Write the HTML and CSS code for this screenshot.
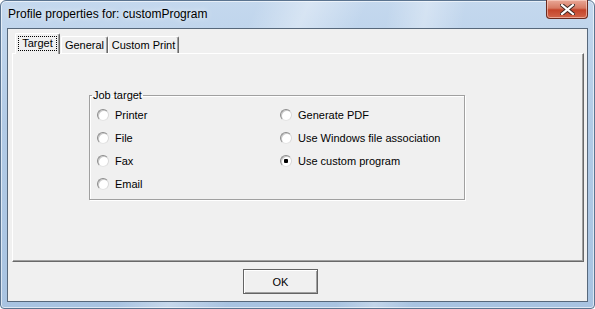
FILE: index.html
```html
<!DOCTYPE html>
<html lang="en">
  <head>
    <meta charset="UTF-8" />
    <title>Profile properties for: customProgram</title>
    <link rel="stylesheet" href="styles.css">
  </head>
  <body>
    <div class="window">
      <div class="titlebar">
        <span class="title">Profile properties for: customProgram</span>
        <button class="close" aria-label="Close">
          <svg width="15" height="11" viewBox="0 0 15 11">
            <path d="M2 1 L13 10 M13 1 L2 10" stroke="#3a2420" stroke-width="4" stroke-linecap="square" />
            <path d="M2 1 L13 10 M13 1 L2 10" stroke="#ffffff" stroke-width="2.2" stroke-linecap="square" />
          </svg>
        </button>
      </div>

      <div class="client">
        <div class="tab-strip">
          <div class="tab tab-active"><span class="focus">Target</span></div>
          <div class="tab tab-general">General</div>
          <div class="tab tab-print">Custom Print</div>
        </div>

        <div class="tab-panel">
          <fieldset class="group">
            <legend>Job target</legend>
            <div class="options">
              <div class="column">
                <label class="option"><input type="radio" name="target" /> Printer</label>
                <label class="option"><input type="radio" name="target" /> File</label>
                <label class="option"><input type="radio" name="target" /> Fax</label>
                <label class="option"><input type="radio" name="target" /> Email</label>
              </div>
              <div class="column">
                <label class="option"><input type="radio" name="target" /> Generate PDF</label>
                <label class="option"><input type="radio" name="target" /> Use Windows file association</label>
                <label class="option"><input type="radio" name="target" checked /> Use custom program</label>
              </div>
            </div>
          </fieldset>
        </div>

        <div class="button-row">
          <button class="ok">OK</button>
        </div>
      </div>
    </div>
  </body>
</html>
```

FILE: styles.css
```css
/* page */
body {
  margin: 0;
  width: 595px;
  height: 309px;
  overflow: hidden;
  font-family: "Liberation Sans", Arial, sans-serif;
  font-size: 11px;
  color: #000;
}

/* aero frame */
.window {
  box-sizing: border-box;
  width: 595px;
  height: 309px;
  display: flex;
  flex-direction: column;
  border: 1px solid #5b7490;
  border-radius: 6px 6px 4px 4px;
  background:
    linear-gradient(115deg, rgba(255, 255, 255, 0) 35%, rgba(255, 255, 255, 0.35) 42%, rgba(255, 255, 255, 0) 50%),
    linear-gradient(100deg, rgba(255, 255, 255, 0) 60%, rgba(255, 255, 255, 0.3) 66%, rgba(255, 255, 255, 0) 72%),
    linear-gradient(to bottom, #c4d8ee 0%, #b2cbe6 40%, #a8c3e1 100%);
  box-shadow: inset 0 0 0 1px rgba(255, 255, 255, 0.6);
}

.titlebar {
  height: 27px;
  display: flex;
  align-items: flex-start;
}

.title {
  padding: 6px 0 0 7px;
  font-size: 12px;
  line-height: 15px;
  color: #000;
  text-shadow: 0 0 6px rgba(255, 255, 255, 0.9);
}

.close {
  margin: -1px 6px 0 auto;
  width: 42px;
  height: 19px;
  padding: 0;
  display: flex;
  align-items: center;
  justify-content: center;
  border: 1px solid #6a2a1f;
  border-top: none;
  border-radius: 0 0 4px 4px;
  background: linear-gradient(to bottom, #e9a897 0%, #d77a63 45%, #c4442a 55%, #d1654a 100%);
  box-shadow: inset 0 0 0 1px rgba(255, 220, 210, 0.55);
}

/* dialog client area */
.client {
  flex: 1;
  margin: 0 6px 6px 6px;
  padding: 4px 3px 0 4px;
  display: flex;
  flex-direction: column;
  background: #f0f0f0;
  border: 1px solid #57687b;
}

/* tabs */
.tab-strip {
  height: 20px;
  display: flex;
  align-items: flex-end;
}

.tab {
  box-sizing: border-box;
  height: 17px;
  display: flex;
  align-items: center;
  justify-content: center;
  background: #f0f0f0;
  border-top: 1px solid #fff;
  border-left: 1px solid #fff;
  border-right: 1px solid #696969;
  border-radius: 2px 2px 0 0;
  box-shadow: inset -1px 0 #a0a0a0;
}

.tab-active {
  position: relative;
  z-index: 1;
  width: 45px;
  height: 21px;
  margin: 0 0 -1px 3px;
  padding-bottom: 2px;
}

.tab-general {
  width: 47px;
  margin-left: 1px;
}

.tab-print {
  width: 71px;
}

.focus {
  padding: 0 3px;
  line-height: 13px;
  outline: 1px dotted #000;
}

.tab-panel {
  box-sizing: border-box;
  height: 209px;
  padding: 35px 0 0 76px;
  border-top: 1px solid #fff;
  border-left: 1px solid #fff;
  border-right: 1px solid #696969;
  border-bottom: 1px solid #696969;
  box-shadow: inset -1px -1px #a0a0a0;
}

/* group box */
.group {
  box-sizing: border-box;
  width: 376px;
  margin: 0;
  padding: 1px 0 4px 2px;
  border: 1px solid #a0a0a0;
  box-shadow: inset 1px 1px #fff, 1px 1px #fff;
}

.group legend {
  padding: 0 1px;
  line-height: 13px;
}

.options {
  display: flex;
  padding-left: 5px;
}

.column {
  display: flex;
  flex-direction: column;
}

.column:first-child {
  width: 183px;
}

.option {
  height: 23px;
  display: flex;
  align-items: center;
  gap: 6px;
  white-space: nowrap;
}

.option input {
  appearance: none;
  box-sizing: border-box;
  width: 12px;
  height: 12px;
  margin: 0;
  border-radius: 50%;
  background: #fff;
  border: 1px solid;
  border-color: #8c8c8c #d8d8d8 #e4e4e4 #8c8c8c;
  box-shadow: inset 1px 1px #c8c8c8;
}

.option input:checked {
  background: radial-gradient(circle, #000 0 2px, #fff 2.5px);
}

/* button row */
.button-row {
  padding: 7px 0 0 231px;
}

.ok {
  box-sizing: border-box;
  width: 75px;
  height: 25px;
  padding: 0;
  font-family: "Liberation Sans", Arial, sans-serif;
  font-size: 11px;
  color: #000;
  background: #f0f0f0;
  border: 1px solid #646464;
  box-shadow: inset 1px 1px #fff, inset -1px -1px #a0a0a0;
}
```
